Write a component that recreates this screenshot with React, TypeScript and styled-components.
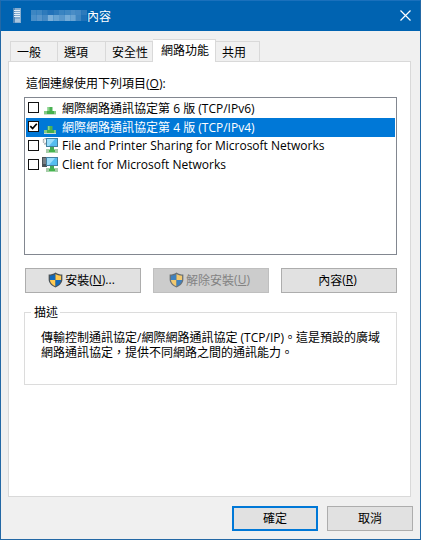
import React from 'react';
import styled, { createGlobalStyle, css } from 'styled-components';

const GlobalStyle = createGlobalStyle`
  * { box-sizing: border-box; }
  html, body { margin: 0; padding: 0; overflow: hidden; }
  body {
    font-family: 'Noto Sans CJK TC', sans-serif;
    font-size: 12px;
    font-weight: 400;
    line-height: 16px;
    color: #000;
    white-space: nowrap;
  }
`;

const Window = styled.div`
  width: 421px;
  height: 540px;
  display: flex;
  flex-direction: column;
  background: #f0f0f0;
  border: 1px solid #2368a5;
  border-top-color: #1a70bc;
`;

const TitleBar = styled.header`
  height: 30px;
  flex: none;
  display: flex;
  align-items: center;
  padding: 0 9px 1px 11px;
  background: #0063b1;
  color: #fff;
`;

const TitleIcon = styled.svg`
  width: 10px;
  height: 17px;
  margin-right: 9px;
`;

const Mosaic = styled.svg`
  width: 56px;
  height: 12px;
`;

const TitleText = styled.span`
  flex: 1;
`;

const CloseIcon = styled.svg`
  width: 11px;
  height: 11px;
`;

const Body = styled.main`
  flex: 1;
  padding: 8px 9px 0 7px;
`;

const TabStrip = styled.nav`
  display: flex;
  align-items: flex-end;
  height: 22px;
  padding-left: 2px;
`;

const Tab = styled.div<{ $width: number; $active?: boolean }>`
  width: ${(p) => p.$width}px;
  height: 20px;
  padding: 2px 0 0 6px;
  background: #f0f0f0;
  border: 1px solid #d9d9d9;
  border-bottom: 0;
  & + & { border-left: 0; }
  ${(p) =>
    p.$active &&
    css`
      height: 23px;
      padding: 2px 0 0 8px;
      margin-bottom: -1px;
      background: #fff;
      z-index: 1;
    `}
`;

const Page = styled.section`
  height: 436px;
  padding: 12px 13px 0 15px;
  background: #fff;
  border: 1px solid #d9d9d9;
`;

const Label = styled.div`
  padding-left: 2px;
  height: 23px;
  line-height: 18px;
`;

const List = styled.div`
  height: 158px;
  padding: 1px;
  border: 1px solid #828790;
`;

const Row = styled.div<{ $selected?: boolean }>`
  height: 19px;
  display: flex;
  align-items: center;
  padding: 0 0 1px 2px;
  background: ${(p) => (p.$selected ? '#0078d7' : '#fff')};
  color: ${(p) => (p.$selected ? '#fff' : '#000')};
`;

const Check = styled.svg`
  width: 12px;
  height: 12px;
  margin: 0 2px 1px 0;
`;

const RowIcon = styled.svg`
  width: 16px;
  height: 16px;
  margin-right: 4px;
`;

const Latin = styled.span`
  font-family: 'Open Sans', 'Noto Sans', sans-serif;
  font-weight: 400;
  font-size: 12px;
  line-height: 12px;
`;

const Buttons = styled.div`
  display: flex;
  gap: 12px;
  padding: 13px 0 0 1px;
`;

const Button = styled.button<{ $width?: number; $primary?: boolean }>`
  width: ${(p) => p.$width ?? 116}px;
  height: 25px;
  padding: 0 0 1px;
  display: flex;
  align-items: center;
  justify-content: center;
  font: inherit;
  color: #000;
  background: #e1e1e1;
  border: ${(p) => (p.$primary ? '2px solid #0078d7' : '1px solid #adadad')};
  ${Buttons} & { padding-right: 3px; }
  &:disabled {
    color: #838383;
    background: #cccccc;
    border-color: #bfbfbf;
  }
`;

const ShieldIcon = styled.svg<{ $dim?: boolean }>`
  width: 15px;
  height: 16px;
  margin: 0 2px 1px 0;
  opacity: ${(p) => (p.$dim ? 0.75 : 1)};
`;

const Group = styled.fieldset`
  height: 81px;
  margin: 11px 0 0;
  padding: 9px 0 0 16px;
  min-width: 0;
  border: 1px solid #dcdcdc;
`;

const Legend = styled.legend`
  margin-left: -10px;
  padding: 0 2px 0 3px;
`;

const Description = styled.p`
  margin: 0;
  line-height: 15px;
`;

const Footer = styled.footer`
  display: flex;
  justify-content: flex-end;
  gap: 9px;
  padding: 9px 0 0;
  margin-right: -2px;
`;

const CheckBox = ({ checked }: { checked?: boolean }) => (
  <Check viewBox="0 0 12 12">
    <rect x=".5" y=".5" width="10" height="10" fill="#fff" stroke="#111" />
    {checked && <path d="M2.3 5.2 4.6 7.6 8.8 2.8" fill="none" stroke="#000" strokeWidth="1.7" />}
  </Check>
);

const ProtocolIcon = () => (
  <RowIcon viewBox="0 0 16 16">
    <path d="M5.5 7h5v5h-5z" fill="#4ab254" />
    <path d="M6 7h1.5v5H6z" fill="#8cd58c" />
    <path d="M2 11h12v3H2z" fill="#46b04d" />
    <path d="M2 11h3v3H2zM12 11h2v3h-2z" fill="#83c985" />
    <path d="M2 14h12v1H2z" fill="#cfdccf" />
  </RowIcon>
);

const ComputerIcon = ({ kind }: { kind: 'service' | 'client' }) => (
  <RowIcon viewBox="0 1 16 16">
    {kind === 'service' ? (
      <g fill="none" stroke="#9ba0a3">
        <circle cx="4" cy="4" r="2.6" strokeDasharray="1.3 .8" strokeWidth="1.6" />
        <path d="M2.5 7.2 3.8 8.5" strokeDasharray="1 .7" />
      </g>
    ) : (
      <g>
        <path d="M0 1h5v10H0z" fill="#4c5358" />
        <path d="M1 3h3M1 5h3M1 7h3" stroke="#a4adb2" />
      </g>
    )}
    <path d="M4 1h12v9H4z" fill="#437f9f" />
    <path d="M5 2h10v7H5z" fill="#55bdf0" />
    <path d="M5 2h8L7 9H5z" fill="#9addfb" />
    <path d="M8 10h4v3H8z" fill="#45a958" />
    <path d="M4 12.5h12v3H4z" fill="#45b44e" />
    <path d="M4 12.5h3v3H4zM13 12.5h3v3h-3z" fill="#a9c8ab" />
  </RowIcon>
);

const Shield = ({ dim }: { dim?: boolean }) => (
  <ShieldIcon viewBox="0 0 14 16" preserveAspectRatio="none" $dim={dim}>
    <path d="M7 .5C5 2 3 2.6.6 2.6v5C.6 11 3.4 14 7 15.5c3.6-1.5 6.4-4.5 6.4-7.9v-5C11 2.6 9 2 7 .5z" fill="#4b5358" />
    <path d="M7 2C5.4 3 3.7 3.6 1.8 3.7V8H7z" fill="#1168ba" />
    <path d="M7 2c1.6 1 3.3 1.6 5.2 1.7V8H7z" fill="#ffc951" />
    <path d="M1.8 8c.2 2.7 2.3 5 5.2 6.3V8z" fill="#ffc951" />
    <path d="M12.2 8c-.2 2.7-2.3 5-5.2 6.3V8z" fill="#1168ba" />
  </ShieldIcon>
);

const mosaicCells = [
  '#3d86c2', '#3d86c2', '#2e7abb', '#2271b8', '#2c79bb', '#3a84c1', '#3f87c2', '#4a8dc6', '#4388c4', '#2e7abb',
  '#4a8fc8', '#5795cb', '#4589c4', '#7bafd9', '#68a3d2', '#5897cc', '#74abd7', '#6aa4d3', '#3e85c1', '#1e70b7',
];

const App = () => (
  <>
    <GlobalStyle />
    <Window>
      <TitleBar>
        <TitleIcon viewBox="0 0 10 17">
          <path d="M1 1h8v15H1z" fill="#86add0" />
          <path d="M1 1h2v15H1z" fill="#5189bc" />
          <path d="M2 3.5h6M2 5.5h6M2 7.5h6M2 9.5h6" stroke="#e4eff7" />
          <path d="M3 12h5v3H3z" fill="#a9c6df" />
        </TitleIcon>
        <Mosaic viewBox="0 0 56 12">
          {mosaicCells.map((fill, i) => (
            <rect key={i} x={(i % 10) * 5.6} y={i < 10 ? 0 : 5} width="5.7" height={i < 10 ? 5 : 6} fill={fill} />
          ))}
        </Mosaic>
        <TitleText>內容</TitleText>
        <CloseIcon viewBox="0 0 11 11">
          <path d="M.5.5 10.5 10.5M10.5.5.5 10.5" stroke="#fff" strokeWidth="1.2" />
        </CloseIcon>
      </TitleBar>
      <Body>
        <TabStrip>
          <Tab $width={48}>一般</Tab>
          <Tab $width={48}>選項</Tab>
          <Tab $width={47}>安全性</Tab>
          <Tab $width={63} $active>網路功能</Tab>
          <Tab $width={44}>共用</Tab>
        </TabStrip>
        <Page>
          <Label>這個連線使用下列項目<Latin>(<u>O</u>):</Latin></Label>
          <List>
            <Row>
              <CheckBox />
              <ProtocolIcon />
              <span>網際網路通訊協定第<Latin> 6 </Latin>版<Latin> (TCP/IPv6)</Latin></span>
            </Row>
            <Row $selected>
              <CheckBox checked />
              <ProtocolIcon />
              <span>網際網路通訊協定第<Latin> 4 </Latin>版<Latin> (TCP/IPv4)</Latin></span>
            </Row>
            <Row>
              <CheckBox />
              <ComputerIcon kind="service" />
              <Latin>File and Printer Sharing for Microsoft Networks</Latin>
            </Row>
            <Row>
              <CheckBox />
              <ComputerIcon kind="client" />
              <Latin>Client for Microsoft Networks</Latin>
            </Row>
          </List>
          <Buttons>
            <Button><Shield />安裝<Latin>(<u>N</u>)...</Latin></Button>
            <Button disabled><Shield dim />解除安裝<Latin>(<u>U</u>)</Latin></Button>
            <Button>內容<Latin>(<u>R</u>)</Latin></Button>
          </Buttons>
          <Group>
            <Legend>描述</Legend>
            <Description>
              傳輸控制通訊協定<Latin>/</Latin>網際網路通訊協定<Latin> (TCP/IP)</Latin>。這是預設的廣域
              <br />
              網路通訊協定，提供不同網路之間的通訊能力。
            </Description>
          </Group>
        </Page>
        <Footer>
          <Button $width={86} $primary>確定</Button>
          <Button $width={86}>取消</Button>
        </Footer>
      </Body>
    </Window>
  </>
);

export default App;
